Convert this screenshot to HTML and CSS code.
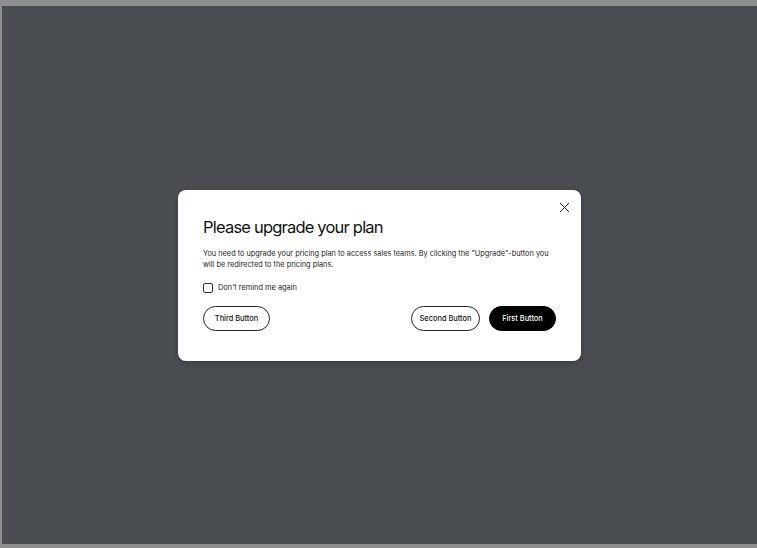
FILE: index.html
```html
<!DOCTYPE html>
<html>
<head>
<meta charset="utf-8">
<link rel="stylesheet" href="styles.css">
</head>
<body>
<div class="overlay">
  <div class="modal">
    <button class="close" aria-label="Close">
      <svg width="11" height="11" viewBox="0 0 11 11"><path d="M1 1L10 10M10 1L1 10" stroke="#222" stroke-width="1" fill="none"/></svg>
    </button>
    <h1 class="title">Please upgrade your plan</h1>
    <p class="text">You need to upgrade your pricing plan to access sales teams. By clicking the "Upgrade"-button you will be redirected to the pricing plans.</p>
    <label class="check"><span class="box"></span>Don't remind me again</label>
    <div class="actions">
      <button class="btn outline btn-third">Third Button</button>
      <div class="right">
        <button class="btn outline btn-second">Second Button</button>
        <button class="btn solid btn-first">First Button</button>
      </div>
    </div>
  </div>
</div>
</body>
</html>
```
FILE: styles.css
```css
html, body { margin: 0; padding: 0; }
body {
  background: #8e8e8e;
  width: 757px;
  height: 548px;
  font-family: Inter, "Noto Sans", sans-serif;
  overflow: hidden;
}
.overlay {
  margin: 6px 0 0 2px;
  width: 755px;
  height: 538px;
  background: #4a4e53;
  display: flex;
  align-items: center;
  justify-content: center;
}
.modal {
  position: relative;
  box-sizing: border-box;
  width: 403px;
  height: 171px;
  background: #fff;
  border-radius: 8px;
  padding: 26px 25px 0 25px;
  box-shadow: 0 2px 6px rgba(0,0,0,0.25);
}
.close {
  position: absolute;
  top: 12px;
  right: 11px;
  border: 0;
  background: none;
  padding: 0;
  width: 11px;
  height: 11px;
  display: block;
}
.close svg { display: block; }
.title {
  margin: 0;
  font-size: 16.5px;
  font-weight: 400;
  color: #111;
  line-height: 22px;
  letter-spacing: -0.8px;
}
.text {
  margin: 10px 0 0 0;
  font-size: 7.35px;
  line-height: 11px;
  color: #222;
}
.check {
  display: flex;
  align-items: center;
  gap: 5px;
  margin-top: 13px;
  font-size: 7.4px;
  color: #222;
}
.box {
  width: 8px;
  height: 8px;
  border: 1px solid #333;
  border-radius: 2px;
}
.actions {
  display: flex;
  justify-content: space-between;
  margin-top: 13px;
}
.right { display: flex; gap: 9px; }
.btn {
  height: 25px;
  border-radius: 13px;
  font-family: Inter, sans-serif;
  font-size: 7.4px;
  font-weight: 500;
  padding: 0;
  box-sizing: border-box;
  text-align: center;
}
.btn-third { width: 67px; }
.btn-second { width: 69px; }
.btn-first { width: 67px; }
.outline { background: #fff; border: 1px solid #222; color: #111; }
.solid { background: #000; border: 1px solid #000; color: #fff; }
```
